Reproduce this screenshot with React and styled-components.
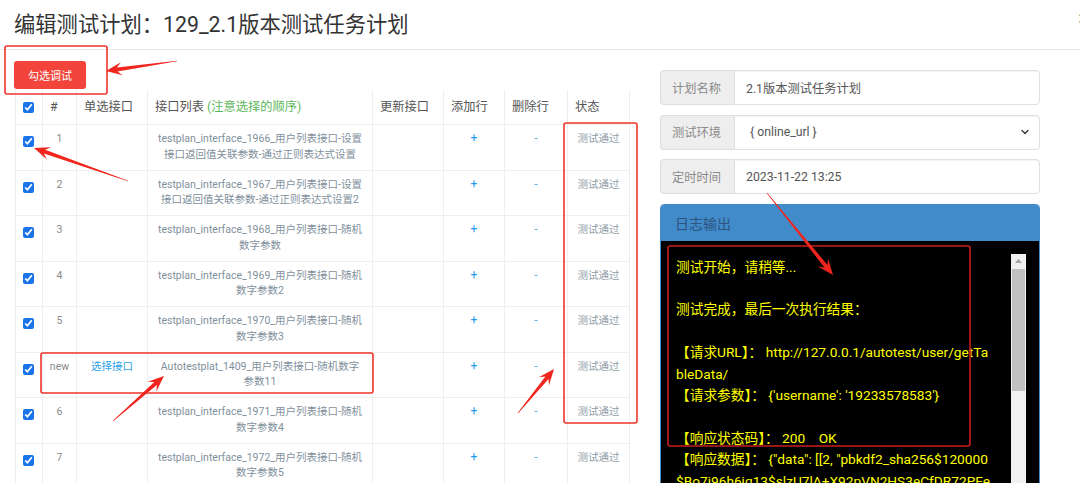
import React from 'react';
import styled, { createGlobalStyle } from 'styled-components';
import { ChevronDown } from 'lucide-react';

const GlobalStyle = createGlobalStyle`
  html, body { margin: 0; padding: 0; overflow: hidden; background: #fff; }
  body { font-family: Roboto, "Noto Sans CJK SC", sans-serif; }
  * { box-sizing: border-box; }
`;

const Page = styled.div`
  position: relative;
  width: 1080px;
  height: 483px;
  overflow: hidden;
`;

const Header = styled.header`
  display: flex;
  align-items: center;
  justify-content: space-between;
  height: 50px;
  padding: 0 0 4px 14px;
  border-bottom: 1px solid #e9e9e9;
`;

const Title = styled.h4`
  margin: 0;
  font-size: 21.3px;
  font-weight: 400;
  color: #333;
`;

const Close = styled.span`
  font-size: 22px;
  font-weight: 700;
  color: #000;
  opacity: 0.45;
  margin-right: -10px;
  margin-top: -8px;
`;

const Body = styled.div`
  display: flex;
  gap: 31px;
  padding: 11px 0 0 15px;
`;

const LeftCol = styled.div`
  width: 614px;
  flex: none;
`;

const RedButton = styled.button`
  display: block;
  width: 72px;
  height: 28px;
  margin: 0 0 1px -1px;
  border: none;
  border-radius: 3px;
  background: #f2443b;
  color: #fff;
  font-family: inherit;
  font-size: 11px;
  padding: 0;
`;

const Table = styled.table`
  width: 614px;
  table-layout: fixed;
  border-collapse: collapse;
`;

const Th = styled.th`
  text-align: left;
  font-weight: 400;
  font-size: 12.25px;
  color: #555;
  padding: 8px 7px;
  line-height: 18px;
  border: 1px solid #eeeeee;
  border-top: none;
  white-space: nowrap;
  vertical-align: middle;
`;

const Hint = styled.span`
  color: #5cb85c;
  margin-left: 3px;
`;

const Td = styled.td`
  text-align: ${(p) => (p.$left ? 'left' : 'center')};
  vertical-align: top;
  font-size: 10.5px;
  line-height: 15.5px;
  padding: 6px ${(p) => (p.$left ? '0 7.5px 7px' : '3px 7.5px')};
  border: 1px solid #eeeeee;
  white-space: nowrap;
  color: ${(p) => p.$color || '#7f909c'};
`;

const Check = styled.input`
  display: block;
  width: 11px;
  height: 11px;
  margin: ${(p) => (p.$head ? '0' : '5px 0 0 0')};
  accent-color: #1a73e8;
`;

const Link = styled.span`
  color: #2ba3e6;
`;

const Op = styled.span`
  color: ${(p) => (p.$minus ? '#5aaedc' : '#1d9cf0')};
  font-size: 12px;
`;

const RightCol = styled.div`
  width: 380px;
  flex: none;
  padding-top: 9px;
`;

const InputGroup = styled.div`
  display: flex;
  height: 35px;
  margin-bottom: 9.5px;
`;

const Addon = styled.div`
  width: 74px;
  flex: none;
  display: flex;
  align-items: center;
  padding-left: 11px;
  background: #eeeeee;
  border: 1px solid #dedede;
  border-right: none;
  border-radius: 4px 0 0 4px;
  color: #8a8a8a;
  font-size: 12.25px;
`;

const Field = styled.div`
  flex: 1;
  display: flex;
  align-items: center;
  justify-content: space-between;
  padding: 0 8px 0 ${(p) => (p.$select ? '15px' : '11px')};
  border: 1px solid #e0e0e0;
  border-radius: 0 4px 4px 0;
  box-shadow: inset 0 1px 1px rgba(0, 0, 0, 0.05);
  color: #555;
  font-size: 12.25px;
`;

const LogPanel = styled.div`
  border: 1px solid #428bca;
  border-radius: 4px 4px 0 0;
  overflow: hidden;
`;

const LogHeading = styled.div`
  height: 36px;
  background: #428bca;
  color: #2c5580;
  font-size: 14px;
  display: flex;
  align-items: center;
  padding-left: 14px;
`;

const LogBody = styled.div`
  display: flex;
  background: #000;
  height: 320px;
  padding: 13px 13px 0 15px;
`;

const LogText = styled.div`
  flex: 1;
  overflow: hidden;
  padding-top: 3px;
  margin-right: 3px;
  color: #ffff00;
  font-size: 13.7px;
`;

const LogLine = styled.div`
  height: 21.45px;
  line-height: 21.45px;
  white-space: pre;
`;

const ScrollTrack = styled.div`
  width: 15px;
  flex: none;
  height: 300px;
  background: #f1f1f1;
  display: flex;
  flex-direction: column;
`;

const ScrollButton = styled.div`
  height: 15px;
  display: flex;
  align-items: center;
  justify-content: center;
`;

const ScrollThumb = styled.div`
  height: 122px;
  margin: 0 1px;
  background: #c1c1c1;
`;

const Overlay = styled.svg`
  position: absolute;
  left: 0;
  top: 0;
  pointer-events: none;
`;

const rows = [
  { n: '1', lines: ['testplan_interface_1966_用户列表接口-设置', '接口返回值关联参数-通过正则表达式设置'] },
  { n: '2', lines: ['testplan_interface_1967_用户列表接口-设置', '接口返回值关联参数-通过正则表达式设置2'] },
  { n: '3', lines: ['testplan_interface_1968_用户列表接口-随机', '数字参数'] },
  { n: '4', lines: ['testplan_interface_1969_用户列表接口-随机', '数字参数2'] },
  { n: '5', lines: ['testplan_interface_1970_用户列表接口-随机', '数字参数3'] },
  { n: 'new', pick: true, lines: ['Autotestplat_1409_用户列表接口-随机数字', '参数11'] },
  { n: '6', lines: ['testplan_interface_1971_用户列表接口-随机', '数字参数4'] },
  { n: '7', lines: ['testplan_interface_1972_用户列表接口-随机', '数字参数5'] },
];

const logLines = [
  '测试开始，请稍等...',
  '',
  '测试完成，最后一次执行结果：',
  '',
  '【请求URL】： http://127.0.0.1/autotest/user/getTa',
  'bleData/',
  "【请求参数】： {'username': '19233578583'}",
  '',
  '【响应状态码】： 200    OK',
  '【响应数据】： {"data": [[2, "pbkdf2_sha256$120000',
  '$Bo7j96h6jq13$slzU7lA+X92pVN2HS3eCfDR72PFe',
  'Ksl3e4lYd0h2nM8=", null, false, "admin"',
];

function arrowPoints([tx, ty], [px, py], head = 16, headW = 6.5, neckW = 2, tailW = 0.3) {
  const dx = px - tx;
  const dy = py - ty;
  const L = Math.hypot(dx, dy);
  const ux = dx / L;
  const uy = dy / L;
  const nx = -uy;
  const ny = ux;
  const kx = px - ux * head * 0.7;
  const ky = py - uy * head * 0.7;
  const bx = px - ux * head;
  const by = py - uy * head;
  const pts = [
    [tx + nx * tailW, ty + ny * tailW],
    [kx + nx * neckW, ky + ny * neckW],
    [bx + nx * headW, by + ny * headW],
    [px, py],
    [bx - nx * headW, by - ny * headW],
    [kx - nx * neckW, ky - ny * neckW],
    [tx - nx * tailW, ty - ny * tailW],
  ];
  return pts.map((p) => p.map((v) => v.toFixed(1)).join(',')).join(' ');
}

const arrows = [
  [[177, 61], [106, 71]],
  [[128, 181], [34, 148]],
  [[113, 421], [164, 376]],
  [[518, 413], [554, 369]],
  [[767, 193], [833, 275]],
];

const boxes = [
  { x: 5, y: 46, w: 102, h: 48, c: '#f0342c' },
  { x: 564, y: 123, w: 73, h: 300, c: '#f0342c' },
  { x: 41, y: 353, w: 332, h: 40, c: '#f0342c' },
  { x: 668, y: 246, w: 302, h: 200, c: '#c81d1d' },
];

export default function App() {
  return (
    <Page>
      <GlobalStyle />
      <Header>
        <Title>编辑测试计划：129_2.1版本测试任务计划</Title>
        <Close>×</Close>
      </Header>
      <Body>
        <LeftCol>
          <RedButton>勾选调试</RedButton>
          <Table>
            <colgroup>
              <col style={{ width: 27 }} />
              <col style={{ width: 34 }} />
              <col style={{ width: 71 }} />
              <col style={{ width: 225 }} />
              <col style={{ width: 71 }} />
              <col style={{ width: 61 }} />
              <col style={{ width: 63 }} />
              <col style={{ width: 62 }} />
            </colgroup>
            <thead>
              <tr>
                <Th><Check type="checkbox" $head defaultChecked /></Th>
                <Th>#</Th>
                <Th>单选接口</Th>
                <Th>接口列表<Hint>(注意选择的顺序)</Hint></Th>
                <Th>更新接口</Th>
                <Th>添加行</Th>
                <Th>删除行</Th>
                <Th>状态</Th>
              </tr>
            </thead>
            <tbody>
              {rows.map((r) => (
                <tr key={r.n}>
                  <Td $left><Check type="checkbox" defaultChecked /></Td>
                  <Td $color="#8a8a8a">{r.n}</Td>
                  <Td>{r.pick ? <Link>选择接口</Link> : null}</Td>
                  <Td>
                    {r.lines[0]}
                    <br />
                    {r.lines[1]}
                  </Td>
                  <Td />
                  <Td><Op>+</Op></Td>
                  <Td><Op $minus>-</Op></Td>
                  <Td $color="#8f9da7">测试通过</Td>
                </tr>
              ))}
            </tbody>
          </Table>
        </LeftCol>
        <RightCol>
          <InputGroup>
            <Addon>计划名称</Addon>
            <Field>2.1版本测试任务计划</Field>
          </InputGroup>
          <InputGroup>
            <Addon>测试环境</Addon>
            <Field $select>
              {'{ online_url }'}
              <ChevronDown size={12} strokeWidth={2.6} color="#333" />
            </Field>
          </InputGroup>
          <InputGroup>
            <Addon>定时时间</Addon>
            <Field>2023-11-22 13:25</Field>
          </InputGroup>
          <LogPanel>
            <LogHeading>日志输出</LogHeading>
            <LogBody>
              <LogText>
                {logLines.map((l, i) => (
                  <LogLine key={i}>{l || '\u00a0'}</LogLine>
                ))}
              </LogText>
              <ScrollTrack>
                <ScrollButton>
                  <svg width="7" height="4" viewBox="0 0 7 4">
                    <polygon points="0,4 3.5,0 7,4" fill="#a3a3a3" />
                  </svg>
                </ScrollButton>
                <ScrollThumb />
              </ScrollTrack>
            </LogBody>
          </LogPanel>
        </RightCol>
      </Body>
      <Overlay width="1080" height="483" viewBox="0 0 1080 483">
        {boxes.map((b, i) => (
          <rect key={i} x={b.x} y={b.y} width={b.w} height={b.h} rx="2" fill="none" stroke={b.c} strokeWidth="1.6" />
        ))}
        {arrows.map((a, i) => (
          <polygon key={i} points={arrowPoints(a[0], a[1])} fill="#f0261e" />
        ))}
      </Overlay>
    </Page>
  );
}
